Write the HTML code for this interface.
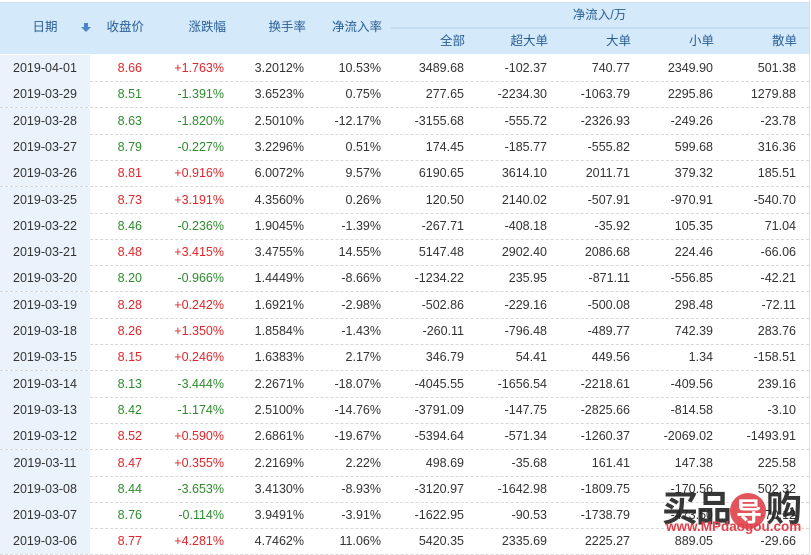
<!DOCTYPE html>
<html><head><meta charset="utf-8"><style>
body{margin:0;width:811px;height:554px;overflow:hidden;background:#fff;font-family:"Liberation Sans","Noto Sans CJK SC",sans-serif;font-size:12.5px;color:#333}
.wrap{position:absolute;left:0;top:0;width:809px;border-right:1px solid #cfe0ee;height:554px}
.top{position:absolute;left:0;top:2px;width:809px;height:1px;background:#d0e0ee}
.hd{position:absolute;background:#d4e9f9;color:#2a5f96}
.r{position:absolute;left:0;width:809px;height:26px;border-bottom:1px dashed #d8d8d8}
.c{position:absolute;top:0;line-height:26px;text-align:right}
.d{position:absolute;left:0;top:0;width:90px;height:26px;background:#eaf3fb;line-height:26px;text-align:center}
.red{color:#e0262a}.grn{color:#2e8b2e}
</style></head><body><div class="wrap">
<div class="top"></div>
<div class="hd" style="left:0;top:3px;width:390px;height:51px"></div>
<div class="hd" style="left:390px;top:3px;width:419px;height:24px;text-align:center;line-height:24px">净流入/万</div>
<div class="hd" style="left:390px;top:29px;width:419px;height:25px"></div>
<div style="position:absolute;left:390px;top:27px;width:419px;height:2px;background:#c3dcef"></div>
<div id="h"></div>
<div id="b"></div>
</div>
<script>
var H=document.getElementById('h');
var L=[[12,66,'日期',27,'center'],[96,48,'收盘价',27],[170,56,'涨跌幅',27],[250,56,'换手率',27],[320,62,'净流入率',27],[400,65,'全部',41],[480,68,'超大单',41],[570,61,'大单',41],[650,64,'小单',41],[730,67,'散单',41]];
var s='';L.forEach(function(a){s+='<div style="position:absolute;left:'+a[0]+'px;width:'+a[1]+'px;top:'+(a[3]-9)+'px;line-height:18px;text-align:'+(a[4]||'right')+';color:#2a5f96">'+a[2]+'</div>'});
s+='<div style="position:absolute;left:84px;top:23px;width:4px;height:4px;background:#4a86c8"></div><div style="position:absolute;left:81px;top:27px;width:0;height:0;border-left:5px solid transparent;border-right:5px solid transparent;border-top:5px solid #4a86c8"></div>';
H.innerHTML=s;
var D=`2019-04-01 8.66 +1.763% 3.2012% 10.53% 3489.68 -102.37 740.77 2349.90 501.38
2019-03-29 8.51 -1.391% 3.6523% 0.75% 277.65 -2234.30 -1063.79 2295.86 1279.88
2019-03-28 8.63 -1.820% 2.5010% -12.17% -3155.68 -555.72 -2326.93 -249.26 -23.78
2019-03-27 8.79 -0.227% 3.2296% 0.51% 174.45 -185.77 -555.82 599.68 316.36
2019-03-26 8.81 +0.916% 6.0072% 9.57% 6190.65 3614.10 2011.71 379.32 185.51
2019-03-25 8.73 +3.191% 4.3560% 0.26% 120.50 2140.02 -507.91 -970.91 -540.70
2019-03-22 8.46 -0.236% 1.9045% -1.39% -267.71 -408.18 -35.92 105.35 71.04
2019-03-21 8.48 +3.415% 3.4755% 14.55% 5147.48 2902.40 2086.68 224.46 -66.06
2019-03-20 8.20 -0.966% 1.4449% -8.66% -1234.22 235.95 -871.11 -556.85 -42.21
2019-03-19 8.28 +0.242% 1.6921% -2.98% -502.86 -229.16 -500.08 298.48 -72.11
2019-03-18 8.26 +1.350% 1.8584% -1.43% -260.11 -796.48 -489.77 742.39 283.76
2019-03-15 8.15 +0.246% 1.6383% 2.17% 346.79 54.41 449.56 1.34 -158.51
2019-03-14 8.13 -3.444% 2.2671% -18.07% -4045.55 -1656.54 -2218.61 -409.56 239.16
2019-03-13 8.42 -1.174% 2.5100% -14.76% -3791.09 -147.75 -2825.66 -814.58 -3.10
2019-03-12 8.52 +0.590% 2.6861% -19.67% -5394.64 -571.34 -1260.37 -2069.02 -1493.91
2019-03-11 8.47 +0.355% 2.2169% 2.22% 498.69 -35.68 161.41 147.38 225.58
2019-03-08 8.44 -3.653% 3.4130% -8.93% -3120.97 -1642.98 -1809.75 -170.56 502.32
2019-03-07 8.76 -0.114% 3.9491% -3.91% -1622.95 -90.53 -1738.79 -473.50 -70.12
2019-03-06 8.77 +4.281% 4.7462% 11.06% 5420.35 2335.69 2225.27 889.05 -29.66`.split('\n');
var R=[142,224,304,381,464,547,630,713,796];
var o='';D.forEach(function(l,i){var f=l.split(' ');var cl=f[2][0]=='+'?'red':'grn';
o+='<div class="r" style="top:'+(55+i*26.3)+'px"><div class="d">'+f[0]+'</div>';
for(var j=1;j<10;j++){o+='<div class="c '+(j<3?cl:'')+'" style="left:'+(R[j-1]-90)+'px;width:90px">'+f[j]+'</div>'}
o+='</div>'});
document.getElementById('b').innerHTML=o;
</script>
<div style="position:absolute;left:662px;top:480px;width:140px;height:40px;font:bold 36px 'Noto Sans CJK SC',sans-serif;color:#222;letter-spacing:-2px;opacity:.9">买品<span style="display:inline-block;width:36px;height:36px;border-radius:50%;background:#e0414a;color:#fff;font-size:26px;text-align:center;line-height:36px">导</span>购</div>
<div style="position:absolute;left:666px;top:519px;font:bold 13.5px 'Liberation Sans',sans-serif;color:#e0414a">www.MPdaogou.com</div>
</body></html>
